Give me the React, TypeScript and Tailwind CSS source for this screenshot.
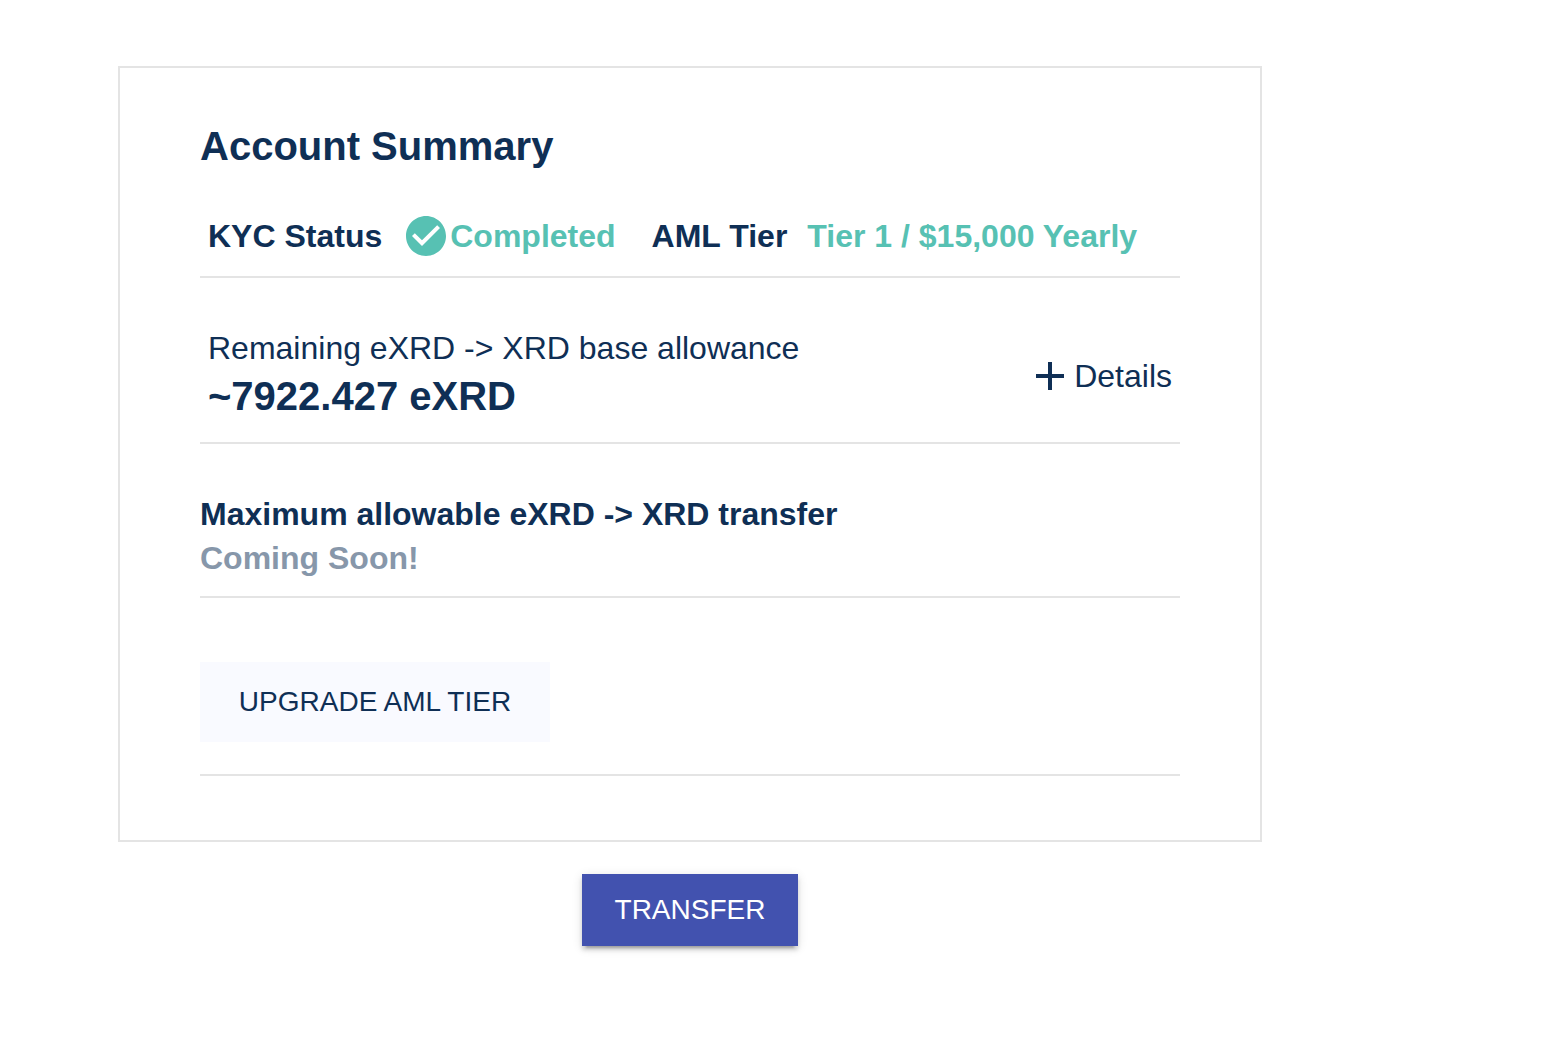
import type { ReactNode } from 'react';

function Row({ className, children }: { className: string; children: ReactNode }) {
  return <div className={`border-b-2 border-[#e4e4e4] ${className}`}>{children}</div>;
}

function CheckCircle() {
  return (
    <svg viewBox="0 0 24 24" className="h-12 w-12 flex-none" fill="currentColor" aria-hidden="true">
      <path d="M12 2C6.48 2 2 6.48 2 12s4.48 10 10 10 10-4.48 10-10S17.52 2 12 2zm-2 15l-5-5 1.41-1.41L10 14.17l7.59-7.59L19 8l-9 9z" />
    </svg>
  );
}

function Plus() {
  return (
    <svg viewBox="0 0 24 24" className="h-12 w-12 flex-none" fill="currentColor" aria-hidden="true">
      <path d="M19 13h-6v6h-2v-6H5v-2h6V5h2v6h6v2z" />
    </svg>
  );
}

export default function App() {
  return (
    <main className="min-h-screen bg-white pt-[66px] pr-[288px] pl-[118px] font-['Liberation_Sans',Arial,sans-serif] text-[32px] leading-11 text-[#0f2f55]">
      <section className="border-2 border-[#e4e4e4] px-20 pt-12 pb-16">
        <h1 className="text-[40px] leading-15 font-bold">Account Summary</h1>

        <Row className="flex items-center px-2 pt-9 pb-4 font-bold whitespace-nowrap">
          <span>KYC Status</span>
          <span className="ml-5 flex items-center text-[#57c1b3]">
            <CheckCircle />
            Completed
          </span>
          <span className="ml-9">AML Tier</span>
          <span className="ml-5 text-[#57c1b3]">Tier 1 / $15,000 Yearly</span>
        </Row>

        <Row className="flex items-center justify-between px-2 pt-12 pb-4">
          <div className="pb-1">
            <p>Remaining eXRD -&gt; XRD base allowance</p>
            <p className="text-[40px] leading-13 font-bold">~7922.427 eXRD</p>
          </div>
          <button type="button" className="flex items-center">
            <Plus />
            Details
          </button>
        </Row>

        <Row className="pt-12 pb-4 font-bold">
          <h2>Maximum allowable eXRD -&gt; XRD transfer</h2>
          <p className="text-[#8797aa]">Coming Soon!</p>
        </Row>

        <Row className="pt-16 pb-8">
          <button type="button" className="h-20 min-w-[350px] bg-[#f9faff] px-8 text-[28px]">
            UPGRADE AML TIER
          </button>
        </Row>
      </section>

      <div className="flex justify-center pt-8">
        <button
          type="button"
          className="h-18 min-w-54 bg-[#4252af] px-7 text-[28px] text-white shadow-[0_6px_2px_-4px_rgba(0,0,0,0.2),0_4px_4px_0_rgba(0,0,0,0.14),0_2px_10px_0_rgba(0,0,0,0.12)]"
        >
          TRANSFER
        </button>
      </div>
    </main>
  );
}
